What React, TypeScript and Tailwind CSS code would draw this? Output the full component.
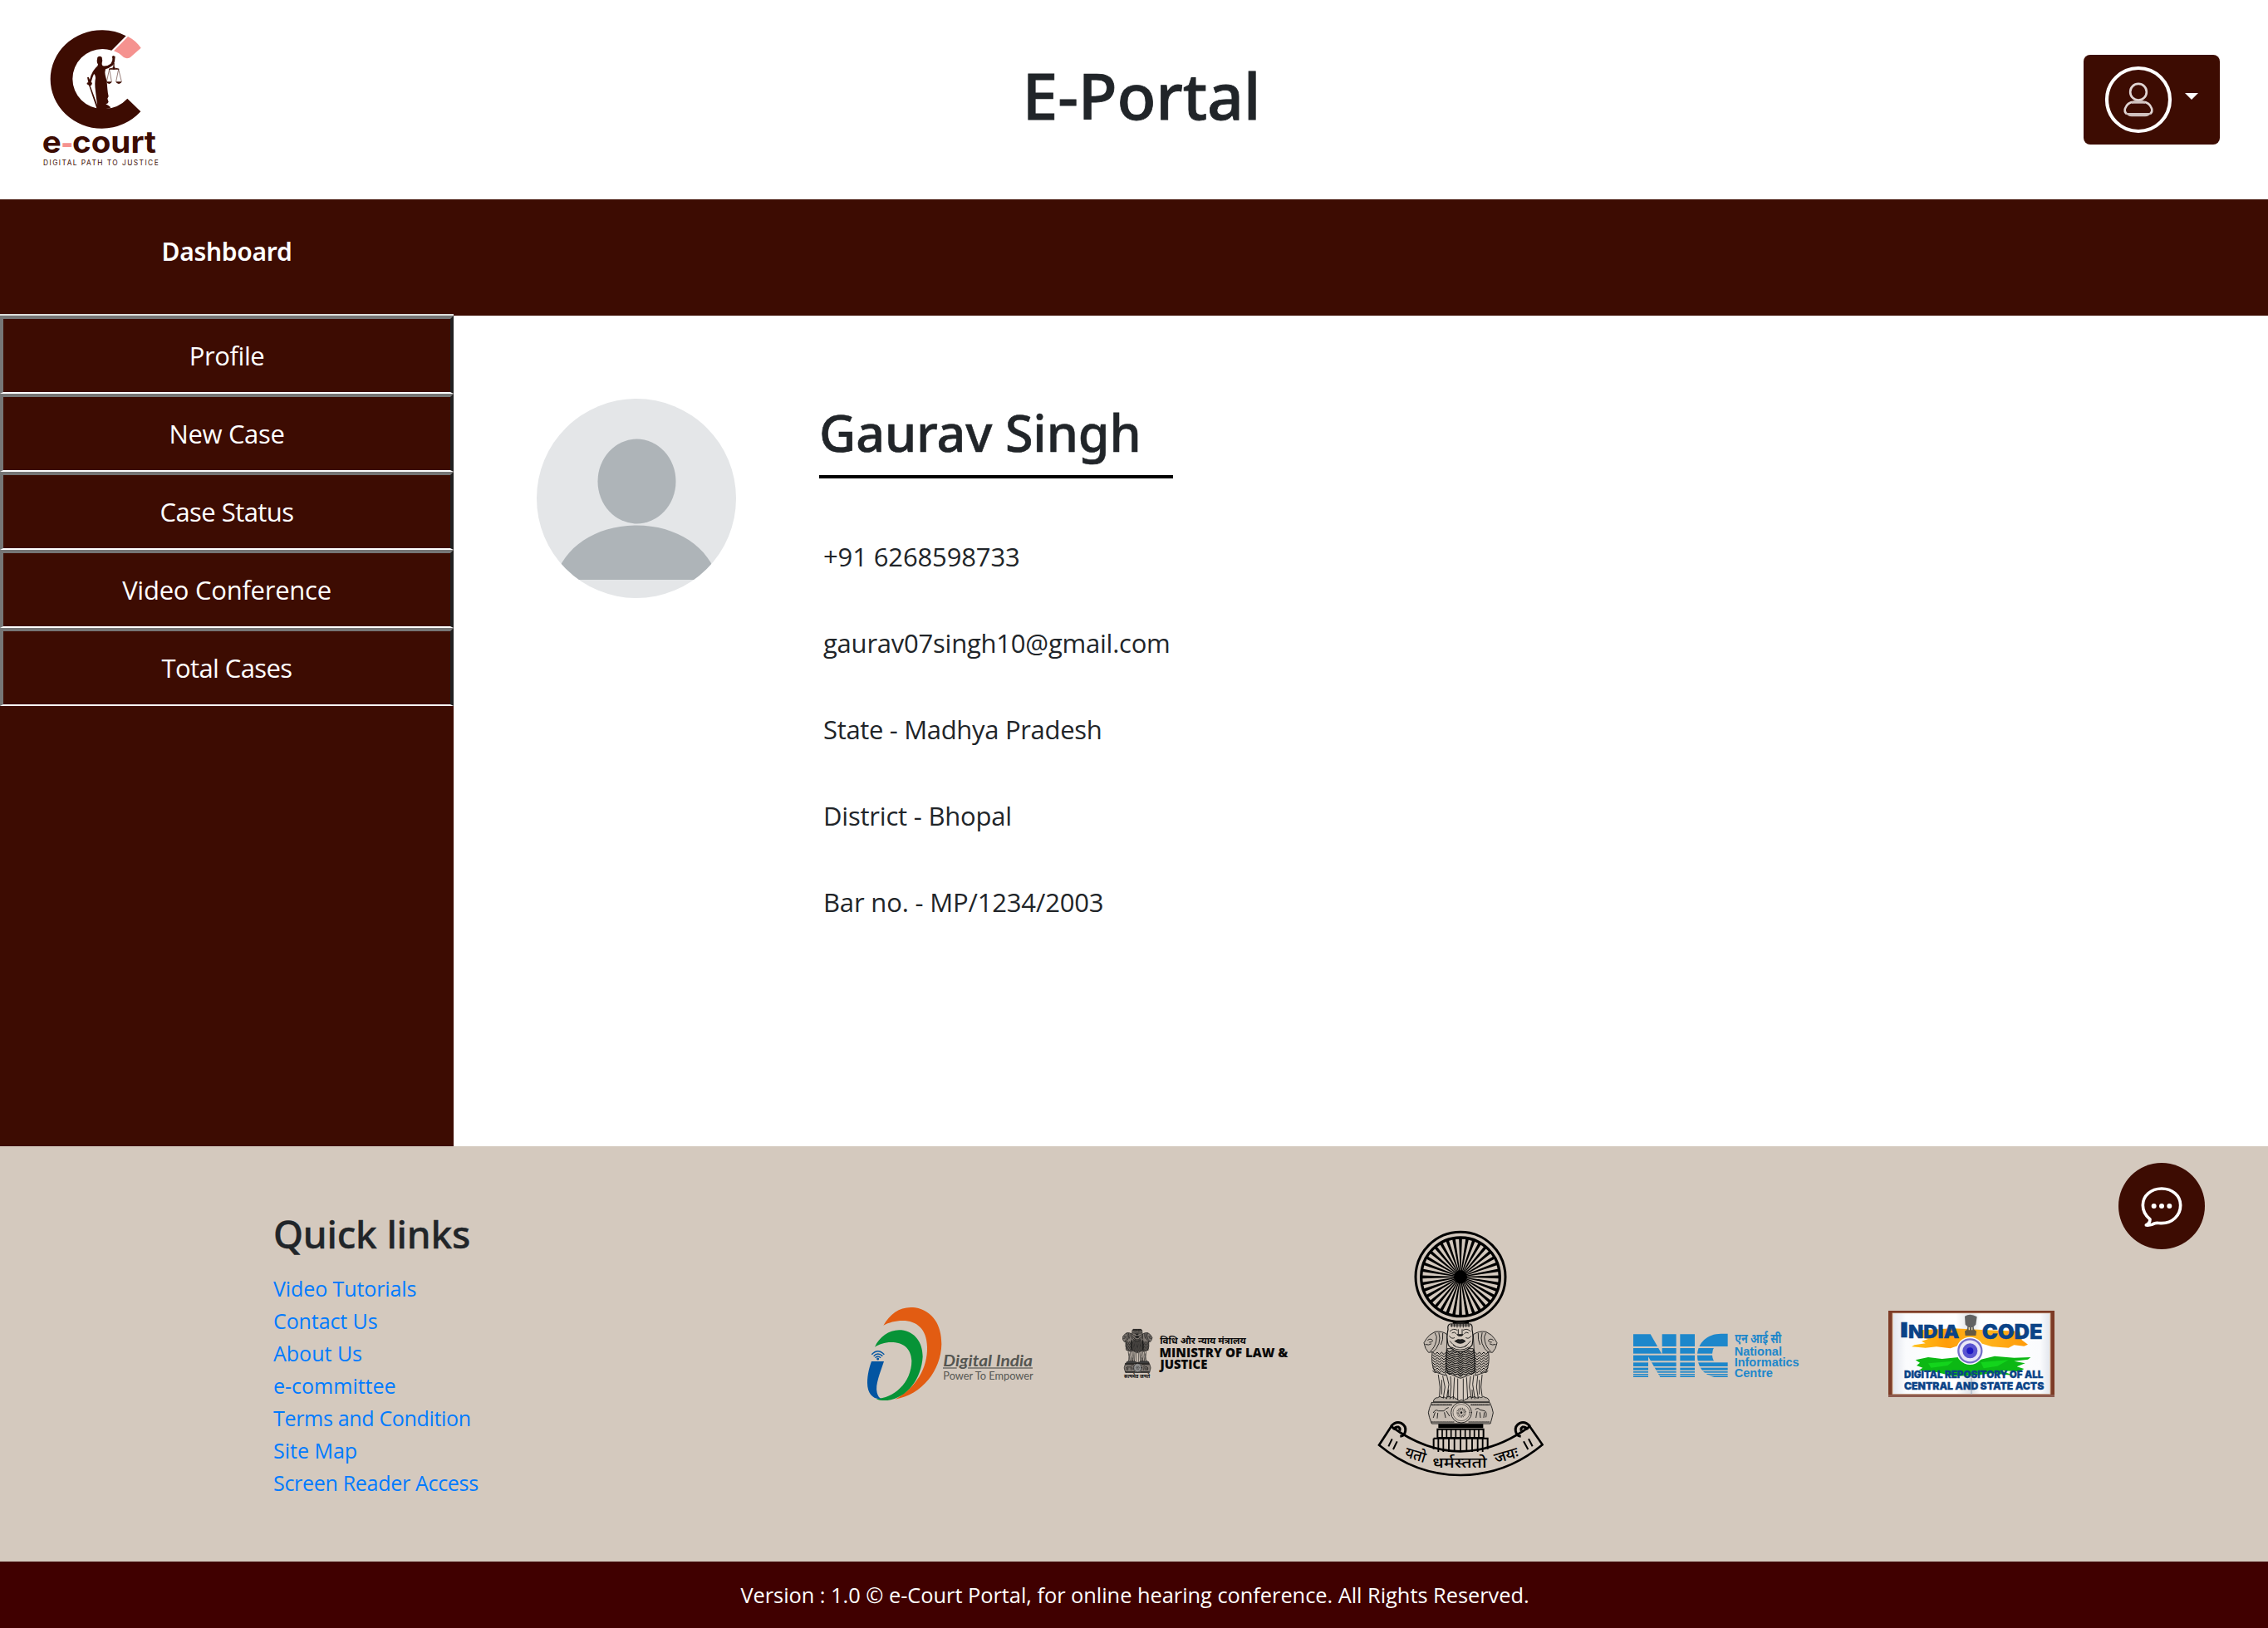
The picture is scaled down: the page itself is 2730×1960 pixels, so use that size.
import type { ReactNode } from 'react';

const MENU = [
  { label: 'Profile', cls: 'tracking-[-0.4px]' },
  { label: 'New Case', cls: 'tracking-[-0.35px]' },
  { label: 'Case Status', cls: 'tracking-[-0.55px]' },
  { label: 'Video Conference', cls: 'tracking-[-0.25px]' },
  { label: 'Total Cases', cls: 'tracking-[-0.6px]' },
];

const DETAILS = [
  { label: '+91 6268598733', cls: 'tracking-[-0.13px]' },
  { label: 'gaurav07singh10@gmail.com', cls: 'tracking-[-0.23px]' },
  { label: 'State - Madhya Pradesh', cls: 'tracking-[-0.32px]' },
  { label: 'District - Bhopal', cls: 'tracking-[-0.2px]' },
  { label: 'Bar no. - MP/1234/2003', cls: 'tracking-[-0.16px]' },
];

const LINKS = [
  { label: 'Video Tutorials', cls: 'tracking-[-0.1px]' },
  { label: 'Contact Us', cls: 'tracking-[-0.1px]' },
  { label: 'About Us', cls: 'tracking-normal' },
  { label: 'e-committee', cls: 'tracking-normal' },
  { label: 'Terms and Condition', cls: 'tracking-[-0.32px]' },
  { label: 'Site Map', cls: 'tracking-normal' },
  { label: 'Screen Reader Access', cls: 'tracking-[-0.3px]' },
];

const DARK = '#3d0c02';

function CourtLogo() {
  return (
    <svg viewBox="0 0 570 600" className="ml-[30px] mt-5 h-[200px] w-[190px] shrink-0">
      <g fill={DARK}>
        <path d="M365 70 A178 178 0 0 0 278 49 A186 177 0 0 0 92 226 A186 178 0 0 0 278 404 A190 178 0 0 0 418 343 L370 296 A115 112 0 0 1 280 333 A108 108 0 0 1 172 225 A108 108 0 0 1 280 117 A108 108 0 0 1 313 122 Z" />
        {/* Lady Justice */}
        <path d="M262 147 Q270 140 278 147 Q281 158 278 168 Q277 174 281 178 Q298 180 310 170 Q318 160 316 150 L314 145 L319 141 L326 144 L325 154 Q324 170 317 176 Q304 186 291 190 Q288 200 290 210 Q298 235 298 262 Q299 275 302 288 L298 296 L302 308 Q300 314 292 316 Q302 320 310 328 Q300 336 262 334 Q254 330 262 322 Q258 300 255 270 Q251 240 255 222 Q254 208 249 208 Q244 218 239 236 L243 240 L240 248 L236 250 L264 326 L258 328 L231 248 L223 243 L226 238 L229 238 L225 220 L230 218 L234 228 Q238 210 246 197 Q252 188 258 182 Q264 179 264 172 Q260 168 260 160 Z" />
        <circle cx="321" cy="186" r="5" />
        <path d="M319 168 h4 v17 h-4z M303 188 Q312 184 321 188 Q330 184 340 188 L340 191 L303 191z M294 235 H314 Q312 243 304 243 Q296 243 294 235z M328 235 H350 Q347 243 339 243 Q331 243 328 235z" />
      </g>
      <g stroke={DARK} strokeWidth="1.6" fill="none">
        <path d="M305 190 L295 235 M305 190 L313 235 M338 190 L329 235 M338 190 L349 235" />
      </g>
      <path d="M372 72 C392 82 408 97 419 113 L384 144 C376 152 365 152 357 147 C345 136 335 129 321 124 Z" fill="#f5928f" />
      <g fontFamily="Inter, 'Liberation Sans', sans-serif">
        <text x="62" y="491" fontSize="110" fontWeight="700" fill={DARK} textLength="69" lengthAdjust="spacingAndGlyphs">e</text>
        <text x="130" y="495" fontSize="106" fontWeight="800" fill="#f5928f" textLength="45" lengthAdjust="spacingAndGlyphs">-</text>
        <text x="171" y="491" fontSize="110" fontWeight="700" fill={DARK} textLength="303" lengthAdjust="spacingAndGlyphs">court</text>
        <text x="66" y="538" fontSize="25" fontWeight="400" fill={DARK} textLength="416" lengthAdjust="spacing">DIGITAL PATH TO JUSTICE</text>
      </g>
    </svg>
  );
}

function UserMenuButton() {
  return (
    <button className="mr-[58px] mt-[66px] flex h-[108px] w-[164px] shrink-0 rounded-lg bg-[#3d0c02]">
      <svg viewBox="0 0 492 324" className="h-[108px] w-[164px]">
        <circle cx="198" cy="162" r="114" fill="none" stroke="#fff" strokeWidth="12.500" />
        <g fill="none" stroke="#e0d5d3" strokeWidth="8">
          <circle cx="198" cy="134" r="29.500" />
          <path d="M156 214 Q146 205 150 194 C155 180 166 171 182 170 H214 C230 171 241 180 246 194 Q250 205 240 214" />
        </g>
        <path d="M152 210 H244 Q238 222 222 223 H174 Q158 222 152 210 Z" fill="#cfc0bd" />
        <path d="M174 168 h48 v8 h-48z" fill="#cfc0bd" />
        <path d="M366 138 H414 L390 162 Z" fill="#fff" />
      </svg>
    </button>
  );
}

function Avatar() {
  return (
    <svg viewBox="0 0 240 240" className="h-60 w-60 shrink-0">
      <defs>
        <clipPath id="avatar-clip">
          <circle cx="120" cy="120" r="120" />
        </clipPath>
      </defs>
      <g clipPath="url(#avatar-clip)">
        <rect width="240" height="240" fill="#e4e6e8" />
        <ellipse cx="120.500" cy="99.500" rx="47" ry="51" fill="#aeb4b8" />
        <path d="M22 218 C32 178 72 152.500 120 152.500 C168 152.500 208 178 218 218 Z" fill="#aeb4b8" />
      </g>
    </svg>
  );
}

function DigitalIndiaLogo() {
  return (
    <svg viewBox="72 66 600 348" className="h-[116px] w-[200px]">
      <path d="M130 137 C156 92 195 66 245 73 C308 84 340 135 340 205 C338 300 270 388 172 404 C250 360 290 290 288 215 C287 150 250 120 200 120 C172 120 150 127 130 137Z" fill="#e25c12" />
      <path d="M99 215 C116 176 155 150 195 154 C245 160 272 200 272 250 C268 330 215 400 145 408 C130 409 112 408 104 402 C165 402 232 345 232 265 C230 218 200 198 158 198 C134 198 114 206 99 215Z" fill="#079337" />
      <path d="M87 267 H132 C118 310 100 350 107 380 C110 393 116 399 123 402 C95 406 72 385 72 345 C72 315 80 285 87 267Z" fill="#0355a2" />
      <g fill="none" stroke="#0355a2" strokeWidth="4.500">
        <path d="M88 242 Q110 218 133 242 M95 248 Q110 232 127 248 M101 254 Q110 244 120 254" />
      </g>
      <circle cx="110" cy="258" r="4.500" fill="#0355a2" />
      <g fill="#555652">
        <text x="346" y="284" fontFamily="Lato, sans-serif" fontSize="58" fontStyle="italic" fontWeight="700" textLength="323" lengthAdjust="spacingAndGlyphs">Digital India</text>
        <path d="M345 289 h50 v4 h-50z M435 289 h234 v4 h-234z" opacity=".8" />
        <text x="346" y="332" fontFamily="Lato, sans-serif" fontSize="38" fontWeight="400" textLength="325" lengthAdjust="spacingAndGlyphs">Power To Empower</text>
      </g>
    </svg>
  );
}

function Lions({ bold = false }: { bold?: boolean }) {
  const rows = Array.from({ length: 11 }, (_, i) => i);
  const w = bold ? 4.5 : 2.6;
  return (
    <g fill="none" stroke="#111" strokeWidth={w} strokeLinejoin="round" strokeLinecap="round">
      {/* side bodies */}
      <path d="M252 474 Q246 515 262 545 L300 558 L306 410 Q288 396 262 400 Q238 412 232 424 L222 440 L228 460 L238 474 Z" fill={bold ? '#00000066' : '#00000014'} />
      <path d="M455 474 Q461 515 446 545 L408 558 L400 410 Q420 396 446 400 Q470 412 476 424 L486 440 L480 460 L470 474 Z" fill={bold ? '#00000066' : '#00000014'} />
      <path d="M236 430 q10 -8 18 2 q-4 8 -12 6 M228 446 q12 4 20 -2 M262 404 q10 14 4 30 q-4 22 -20 36 M276 404 q6 20 0 38 q-8 22 -22 32 M290 406 q2 24 -6 40" />
      <path d="M472 430 q-10 -8 -18 2 q4 8 12 6 M480 446 q-12 4 -20 -2 M446 404 q-10 14 -4 30 q4 22 20 36 M432 404 q-6 20 0 38 q8 22 22 32 M418 406 q-2 24 6 40" />
      {rows.slice(0, 8).map((i) => (
        <path key={i} strokeWidth={w + 0.4} d={`M254 ${474 + i * 9.5} l8 8 l8 -8 l8 8 l8 -8 l8 8 l8 -8 M406 ${474 + i * 9.5} l8 8 l8 -8 l8 8 l8 -8 l8 8 l7 -8`} />
      ))}
      {/* central body */}
      <path d="M306 462 Q296 510 308 548 Q330 560 354 568 Q380 560 402 548 Q412 510 400 462 Z" fill={bold ? '#00000066' : '#00000022'} />
      {rows.map((i) => (
        <path key={i} strokeWidth={w + 0.8} d={`M304 ${466 + i * 8} l10 8 l10 -6 l10 8 l10 -4 l10 9 l10 -9 l10 4 l10 -8 l10 6 l10 -8`} />
      ))}
      {/* central head */}
      <path d="M316 372 Q306 376 309 392 Q302 420 310 448 Q330 472 353 473 Q378 472 396 448 Q402 420 396 392 Q398 376 390 372 Z" fill={bold ? '#7d766f' : '#d4c9be'} strokeWidth={w + 1} />
      <path d="M318 378 H388 M322 372 v10 M332 372 v10 M342 372 v12 M353 372 v12 M364 372 v12 M374 372 v10 M384 372 v10" />
      <path d="M316 398 q12 -12 26 -4 M390 398 q-12 -12 -26 -4 M324 404 q8 -6 14 2 M382 404 q-8 -6 -14 2 M346 392 v16 M360 392 v16 M314 416 q8 12 18 6 M392 416 q-8 12 -18 6 M316 434 q12 14 20 20 M390 434 q-12 14 -20 20" />
      <path d="M342 410 h22 l-6 5 h-10z M334 434 q10 -9 19 -5 q9 -4 19 5 q-10 8 -19 8 q-9 0 -19 -8z" fill="#222" />
      <path d="M328 448 q25 20 50 0 M322 456 q31 20 62 0" />
      {/* legs */}
      <path d="M274 556 L280 600 L278 632 M290 560 L298 600 L292 640 M304 556 L312 590 L304 642 M318 562 L320 600 L316 642 M332 566 L328 642 M344 570 L344 646 M364 570 L364 646 M376 566 L380 642 M390 562 L386 600 L394 642 M402 556 L398 590 L406 642 M416 560 L412 600 L418 640 M432 556 L428 600 L432 632 M286 575 L286 625 M311 610 L309 636 M396 610 L398 636 M422 575 L422 625" />
      <path d="M256 652 q2 -14 16 -14 q6 -8 16 0 q6 -6 14 2 q8 -12 18 -2 q10 -8 16 4 q8 -2 12 8 q10 -8 18 0 q4 -8 12 -8 q8 -12 18 -4 q10 -8 18 2 q8 -8 14 -2 q10 -8 16 0 q12 0 14 14 Z" fill={bold ? '#444' : '#00000022'} />
      {/* abacus */}
      <path d="M250 656 H460 Q464 664 468 676 Q476 692 468 710 L462 732 H250 L242 710 Q234 692 242 676 Q246 664 250 656Z" fill={bold ? '#00000066' : '#00000010'} />
      <path d="M250 664 H322 M392 664 H460 M250 726 H330 M384 726 H460" strokeWidth={w + 1} strokeDasharray="4 3" />
      <path d="M256 692 q8 -14 18 -6 l20 0 q8 -10 16 -12 M262 692 l-6 18 M272 694 l-2 18 M296 692 l4 18 M304 688 l10 16 M408 680 q10 -8 16 2 l18 4 q8 6 4 22 M414 688 l-4 22 M424 692 l2 18 M440 692 l-2 18" />
      <circle cx="357" cy="692" r="37" fill={bold ? '#999' : '#d4c9be'} />
      <circle cx="357" cy="692" r="30" strokeWidth="1.500" />
      <circle cx="357" cy="692" r="13" strokeWidth="10" strokeDasharray="1.500 3" strokeLinecap="butt" />
      <circle cx="357" cy="692" r="4" fill="#111" stroke="none" />
    </g>
  );
}

function MinistryLogo() {
  return (
    <svg viewBox="66 54 602 192" className="h-[64px] w-[200px]">
      <g transform="translate(-25 -100) scale(.41 .434)">
        <Lions bold />
      </g>
      <g fill="#0a0a0a" fontFamily="'Noto Sans', sans-serif">
        <text x="72" y="238" fontSize="19" fontWeight="700" textLength="94" lengthAdjust="spacingAndGlyphs">सत्यमेव जयते</text>
        <text x="202" y="114" fontSize="33" fontWeight="700" textLength="312" lengthAdjust="spacingAndGlyphs">विधि और न्याय मंत्रालय</text>
        <text x="200" y="161" fontSize="45" fontWeight="800" fontFamily="'Open Sans', sans-serif" textLength="466" lengthAdjust="spacingAndGlyphs">MINISTRY OF LAW &amp;</text>
        <text x="203" y="205" fontSize="45" fontWeight="800" fontFamily="'Open Sans', sans-serif" textLength="171" lengthAdjust="spacingAndGlyphs">JUSTICE</text>
      </g>
    </svg>
  );
}

function SupremeCourtEmblem() {
  const spokes = Array.from({ length: 36 }, (_, i) => i * 10);
  const bricks = [288, 304, 320, 337, 354, 371, 388, 404, 420];
  const bricks2 = [274, 292, 312, 332, 354, 376, 396, 416, 434];
  return (
    <svg viewBox="54 30 600 900" className="h-[300px] w-[200px]">
      <circle cx="354" cy="202" r="162" fill="none" stroke="#000" strokeWidth="9" />
      <circle cx="354" cy="202" r="142" fill="none" stroke="#000" strokeWidth="10" />
      {spokes.map((a) => (
        <path key={a} d="M353 202 L348.500 62 H359.500 L355 202 Z" transform={`rotate(${a} 354 202)`} />
      ))}
      <circle cx="354" cy="202" r="24" />
      <path d="M326 364 Q354 372 384 364 V371 H326Z" />
      <Lions />
      <path d="M274 733 H436 V748 H274Z" />
      <g fill="none" stroke="#000" strokeWidth="6">
        <path d="M271 752 H437 V783 H271Z M257 785 H452 V824 M257 824 V785" />
        <path d={bricks.map((x) => `M${x} 752 V783`).join(' ')} strokeWidth="5" />
        <path d={bricks2.map((x) => `M${x} 786 V834`).join(' ')} strokeWidth="5.500" />
      </g>
      <g fill="none" stroke="#000" strokeWidth="8" strokeLinejoin="miter">
        <path d="M104 742 L60 809 Q190 917 354 918 Q520 917 650 808 L604 742 Q480 832 354 832 Q228 832 104 742 Z" />
        <path d="M103 742 Q120 722 140 730 Q158 740 155 758 Q152 776 136 778 M112 754 Q118 742 130 744 Q138 748 134 758" strokeWidth="9" />
        <path d="M605 742 Q588 722 568 730 Q550 740 553 758 Q556 776 572 778 M596 754 Q590 742 578 744 Q570 748 574 758" strokeWidth="9" />
        <path d="M107 787 L94 814 M125 796 L111 825 M582 796 L598 825 M600 787 L614 814" strokeWidth="6" />
      </g>
      <g fontFamily="'Noto Sans', sans-serif" fontSize="54" fontWeight="500">
        <text x="150" y="851" transform="rotate(17 150 851)" textLength="76" lengthAdjust="spacingAndGlyphs">यतो</text>
        <text x="253" y="890" textLength="196" lengthAdjust="spacingAndGlyphs">धर्मस्ततो</text>
        <text x="482" y="877" transform="rotate(-17 482 877)" textLength="88" lengthAdjust="spacingAndGlyphs">जयः</text>
      </g>
    </svg>
  );
}

function NicLogo() {
  const stripes: [number, number][] = [
    [153, 6], [179, 6], [205, 6], [225, 5], [239, 4], [248, 4], [256, 3],
  ];
  return (
    <svg viewBox="45 90 606 180" className="-mr-px ml-0 h-[60px] w-[202px]">
      <g fill="#1d87cb">
        <path d="M48 109 H110 L152 182 V109 H203 V264 H145 L102 190 V264 H48Z M217 109 H270 V264 H217Z M389 107 V153 H342 Q332 166 333 184 Q334 202 343 210 H389 V264 H340 C300 256 279 225 279 184 C281 140 315 107 365 107 Z" />
      </g>
      <g fill="#d4c9be">
        {stripes.map(([y, h]) => (
          <rect key={y} x="48" y={y} width="342" height={h} />
        ))}
      </g>
      <g fill="#1d87cb" fontFamily="'Liberation Sans', sans-serif" fontWeight="700">
        <text x="415" y="141" fontSize="50" fontFamily="'Noto Sans', sans-serif" textLength="168" lengthAdjust="spacingAndGlyphs">एन आई सी</text>
        <text x="413" y="185" fontSize="46" textLength="172" lengthAdjust="spacingAndGlyphs">National</text>
        <text x="413" y="224" fontSize="46" textLength="234" lengthAdjust="spacingAndGlyphs">Informatics</text>
        <text x="413" y="263" fontSize="46" textLength="139" lengthAdjust="spacingAndGlyphs">Centre</text>
      </g>
    </svg>
  );
}

function IndiaCodeLogo() {
  return (
    <svg viewBox="66 54 600 312" className="h-[104px] w-[200px]">
      <defs>
        <linearGradient id="page" x1="0" x2="1">
          <stop offset="0" stopColor="#e4e7ee" />
          <stop offset=".08" stopColor="#fafbfd" />
          <stop offset=".4" stopColor="#fff" />
          <stop offset=".5" stopColor="#dfe1e6" />
          <stop offset=".56" stopColor="#fff" />
          <stop offset=".94" stopColor="#fafbfd" />
          <stop offset="1" stopColor="#e4e7ee" />
        </linearGradient>
        <linearGradient id="saffron" x1="0" x2="1">
          <stop offset="0" stopColor="#ffc21a" />
          <stop offset=".3" stopColor="#ff9d0a" />
          <stop offset=".6" stopColor="#ffb61e" />
          <stop offset="1" stopColor="#ff9a08" />
        </linearGradient>
      </defs>
      <rect x="66" y="54" width="600" height="312" fill="#7d3b26" />
      <rect x="66" y="357" width="600" height="9" fill="#8d5a4e" />
      <rect x="80" y="62" width="572" height="294" fill="#e3cdb6" />
      <rect x="84" y="64" width="564" height="290" fill="url(#page)" />
      <path d="M186 124 L300 118 L420 124 L540 128 L548 160 L570 176 L556 182 L520 178 L500 188 L440 184 L400 172 L330 176 L290 190 L240 184 L200 188 L150 184 L160 178 L200 172 L186 164 L210 156 L176 150 Z" fill="url(#saffron)" />
      <path d="M164 232 L210 222 L260 228 L320 222 L400 230 L450 218 L520 224 L580 222 L570 230 L520 236 L560 244 L530 256 L556 264 L540 274 L470 270 L520 288 L440 280 L380 288 L300 290 L240 276 L176 270 L190 260 L168 252 L180 242 Z" fill="#0cb814" />
      <path d="M210 244 L300 236 L280 252 L220 260Z M400 240 L500 232 L460 254 L410 262Z" fill="#13d41c" />
      <circle cx="361" cy="199" r="50" fill="#fff" />
      <circle cx="361" cy="199" r="42" fill="#e8e6f7" stroke="#7570c9" strokeWidth="7" />
      <circle cx="361" cy="199" r="27" fill="#5a55d0" />
      <circle cx="361" cy="199" r="12" fill="#1d18c4" />
      <path d="M342 74 Q362 62 386 76 L382 104 L374 112 L376 122 L384 128 L382 144 H344 L342 128 L350 122 L352 112 L344 104Z" fill="#4a4a4a" opacity=".85" />
      <path d="M356 114 h4 v10 h-4z M366 114 h4 v10 h-4z" fill="#e8d9b0" />
      <path d="M366 290 V356" stroke="#a9b6c4" strokeWidth="6" opacity=".6" />
      <g fill="#0b4387" stroke="#0b4387" strokeWidth="1" fontFamily="Inter, sans-serif" fontWeight="900">
        <text x="108" y="149" fontSize="74" textLength="30" lengthAdjust="spacingAndGlyphs">I</text>
        <text x="138" y="153" fontSize="66" textLength="184" lengthAdjust="spacingAndGlyphs">NDIA</text>
        <text x="404" y="155" fontSize="72" textLength="219" lengthAdjust="spacingAndGlyphs">CODE</text>
        <text x="123" y="298" fontSize="36" textLength="502" lengthAdjust="spacingAndGlyphs">DIGITAL REPOSITORY OF ALL</text>
        <text x="123" y="338" fontSize="36" textLength="505" lengthAdjust="spacingAndGlyphs">CENTRAL AND STATE ACTS</text>
      </g>
    </svg>
  );
}

function ChatButton() {
  return (
    <button className="absolute right-[76px] top-5 h-[104px] w-[104px] rounded-full bg-[#3d0c02]">
      <svg viewBox="90 90 312 312" className="h-full w-full">
        <path d="M204 294 C187 280 178 262 178 243 C178 208 208 183 246 183 C284 183 314 208 314 243 C314 280 284 308 246 308 C236 308 228 306 222 308 C212 314 200 316 190 315 C200 310 204 302 204 294 Z" fill="none" stroke="#fff" strokeWidth="11" strokeLinejoin="round" />
        <g fill="#fff">
          <circle cx="218" cy="246" r="9" />
          <circle cx="246" cy="246" r="9" />
          <circle cx="274" cy="246" r="9" />
        </g>
      </svg>
    </button>
  );
}

function MenuItem({ children, cls }: { children: ReactNode; cls: string }) {
  return (
    <button className="block h-[94px] w-full border-x-4 border-b-2 border-t-4 border-b-white border-l-[#767676] border-r-[#212121] border-t-[#767676] bg-[#3d0c02] text-center text-[31px] leading-[88px] text-white">
      <span className={cls}>{children}</span>
    </button>
  );
}

export default function App() {
  return (
    <div className="flex h-[1960px] w-full flex-col bg-white font-['Open_Sans','Noto_Sans',sans-serif] text-[#212529]">
      <header className="flex h-60 items-start justify-between">
        <CourtLogo />
        <h1 className="ml-[23px] mt-[55px] w-[290px] whitespace-nowrap font-['Noto_Sans',sans-serif] text-[77px] font-medium leading-[120px] tracking-[-0.2px] [-webkit-text-stroke:0.8px_#212529]">
          E-Portal
        </h1>
        <UserMenuButton />
      </header>

      <nav className="flex h-[140px] bg-[#3d0c02]">
        <div className="w-[546px] border-b-2 border-[#dededb] pt-[27px] text-center font-['Noto_Sans',sans-serif] text-[30px] font-semibold leading-[72px] tracking-[-0.3px] text-white">
          Dashboard
        </div>
      </nav>

      <div className="flex h-[1000px]">
        <aside className="w-[546px] shrink-0 bg-[#3d0c02]">
          {MENU.map((m) => (
            <MenuItem key={m.label} cls={m.cls}>
              {m.label}
            </MenuItem>
          ))}
        </aside>
        <main className="flex items-start gap-[100px] pl-[100px] pt-[100px]">
          <Avatar />
          <div className="w-[426px]">
            <h2 className="h-24 whitespace-nowrap border-b-4 border-black font-['Noto_Sans',sans-serif] text-[61px] font-medium leading-[81px] tracking-[-0.15px] [-webkit-text-stroke:0.6px_#212529]">
              Gaurav Singh
            </h2>
            <ul className="pl-[5px] pt-[42px] text-[31px]">
              {DETAILS.map((d) => (
                <li key={d.label} className="h-[104px] whitespace-nowrap leading-[104px]">
                  <span className={d.cls}>{d.label}</span>
                </li>
              ))}
            </ul>
          </div>
        </main>
      </div>

      <footer>
        <section className="relative flex h-[500px] bg-[#d4c9be]">
          <div className="w-[1044px] shrink-0 pl-[329px] pt-[75px]">
            <h3 className="whitespace-nowrap font-['Noto_Sans',sans-serif] text-[46px] font-medium leading-[60px] tracking-[-0.2px] [-webkit-text-stroke:0.4px_#212529]">
              Quick links
            </h3>
            <ul className="pt-[17px] text-[25px] leading-[39px] text-[#007bff]">
              {LINKS.map((l) => (
                <li key={l.label}>
                  <a href="#" className={l.cls}>
                    {l.label}
                  </a>
                </li>
              ))}
            </ul>
          </div>
          <div className="flex shrink-0 items-center gap-[107px]">
            <DigitalIndiaLogo />
            <MinistryLogo />
            <SupremeCourtEmblem />
            <NicLogo />
            <IndiaCodeLogo />
          </div>
          <ChatButton />
        </section>
        <div className="h-20 bg-[#400000] pl-[2px] text-center text-[25.4px] leading-[80px] tracking-[-0.03px] text-white">
          Version : 1.0 © e-Court Portal, for online hearing conference. All Rights Reserved.
        </div>
      </footer>
    </div>
  );
}
